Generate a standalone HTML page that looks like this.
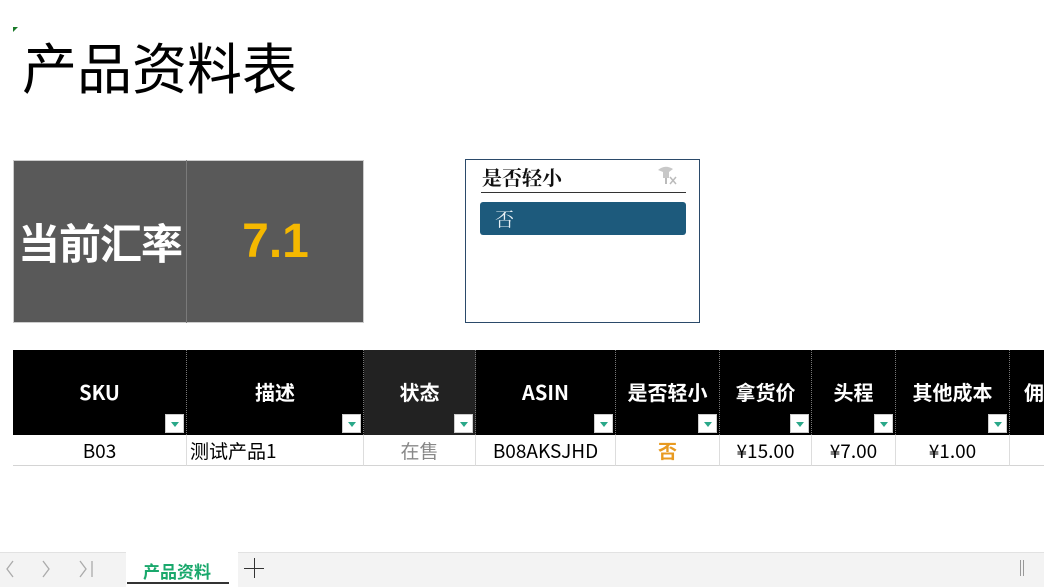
<!DOCTYPE html>
<html><head><meta charset="utf-8"><style>
*{margin:0;padding:0;box-sizing:border-box}
body{width:1044px;height:587px;overflow:hidden;background:#fff;position:relative;font-family:"Liberation Sans","Noto Sans CJK SC",sans-serif}
.a{position:absolute}
.title{left:22px;top:30px;font-size:55px;line-height:70px;color:#000;font-family:"Noto Sans CJK SC",sans-serif}
.h{position:absolute;top:350px;height:85px;background:#000;color:#fff;font-weight:bold;font-size:20px;display:flex;align-items:center;justify-content:center;border-right:1px dotted #777;font-family:"Noto Sans CJK SC",sans-serif}
.h span{margin-top:-2px}
.dd{position:absolute;right:2px;bottom:2px;width:19px;height:19px;background:#fff;border:1px solid #ccc}
.dd:after{content:"";position:absolute;left:5px;top:7px;border-left:4px solid transparent;border-right:4px solid transparent;border-top:5px solid #2aa889}
.d{position:absolute;top:435px;height:31px;border-right:1px solid #ddd;border-bottom:1px solid #d4d4d4;font-size:19px;display:flex;align-items:center;justify-content:center;color:#000;font-family:"Noto Sans CJK SC",sans-serif}
</style></head><body>
<div class="a" style="left:13px;top:27px;width:0;height:0;border-top:5px solid #1a7a2a;border-right:5px solid transparent"></div>
<div class="a title">产品资料表</div>
<div class="a" style="left:13px;top:160px;width:351px;height:163px;background:#595959;border:1px solid #ccc"></div>
<div class="a" style="left:186px;top:160px;width:1px;height:163px;background:#7a7a7a"></div>
<div class="a" style="left:13px;top:160px;width:174px;height:163px;display:flex;align-items:center;justify-content:center;color:#fff;font-weight:bold;font-size:42px;letter-spacing:-1px;font-family:'Noto Sans CJK SC',sans-serif">当前汇率</div>
<div class="a" style="left:187px;top:160px;width:177px;height:163px;display:flex;align-items:center;justify-content:center;color:#f5b800;font-weight:bold;font-size:48px">7.1</div>
<div class="a" style="left:465px;top:159px;width:235px;height:164px;border:1px solid #2b4a6a;background:#fff"></div>
<div class="a" style="left:482px;top:163px;font-size:20px;line-height:28px;font-weight:bold;font-family:'Noto Serif CJK SC',serif;color:#111">是否轻小</div>
<div class="a" style="left:481px;top:192px;width:205px;height:1px;background:#333"></div>
<svg class="a" style="left:655px;top:164px" width="24" height="22" viewBox="0 0 24 22"><path d="M3 6 Q10 0 18 5 L14 8 L14 14 L8 14 L8 8 Z" fill="#c8c8c8"/><path d="M11 14 L11 20" stroke="#bbb" stroke-width="2"/><path d="M15 13 L21 20 M21 13 L15 20" stroke="#bbb" stroke-width="1.5"/></svg>
<div class="a" style="left:480px;top:202px;width:206px;height:33px;background:#1d5a7c;border-radius:3px;color:#e8f0f5;font-size:19px;line-height:33px;padding-left:15px;font-family:'Noto Serif CJK SC',serif">否</div>

<div class="h" style="left:13px;width:174px"><span>SKU</span><i class="dd"></i></div>
<div class="h" style="left:187px;width:177px"><span>描述</span><i class="dd"></i></div>
<div class="h" style="left:364px;width:112px;background:#222"><span>状态</span><i class="dd"></i></div>
<div class="h" style="left:476px;width:140px"><span>ASIN</span><i class="dd"></i></div>
<div class="h" style="left:616px;width:104px"><span>是否轻小</span><i class="dd"></i></div>
<div class="h" style="left:720px;width:92px"><span>拿货价</span><i class="dd"></i></div>
<div class="h" style="left:812px;width:84px"><span>头程</span><i class="dd"></i></div>
<div class="h" style="left:896px;width:114px"><span>其他成本</span><i class="dd"></i></div>
<div class="h" style="left:1010px;width:60px;justify-content:flex-start;padding-left:14px"><span>佣</span></div>

<div class="d" style="left:13px;width:174px">B03</div>
<div class="d" style="left:187px;width:177px;justify-content:flex-start;padding-left:3px">测试产品1</div>
<div class="d" style="left:364px;width:112px;color:#888">在售</div>
<div class="d" style="left:476px;width:140px">B08AKSJHD</div>
<div class="d" style="left:616px;width:104px;color:#e89a20;font-weight:bold">否</div>
<div class="d" style="left:720px;width:92px">¥15.00</div>
<div class="d" style="left:812px;width:84px">¥7.00</div>
<div class="d" style="left:896px;width:114px">¥1.00</div>
<div class="d" style="left:1010px;width:40px"></div>

<div class="a" style="left:0;top:552px;width:1044px;height:35px;background:#f3f3f3;border-top:1px solid #e2e2e2"></div>
<svg class="a" style="left:0;top:555px" width="110" height="28" viewBox="0 0 110 28"><g fill="none" stroke="#aaa" stroke-width="1.3"><path d="M13 6 L7 14 L13 22"/><path d="M43 6 L49 14 L43 22"/><path d="M80 6 L86 14 L80 22"/><path d="M92 6 L92 22"/></g></svg>
<div class="a" style="left:126px;top:552px;width:112px;height:35px;background:#fff"></div>
<div class="a" style="left:143px;top:558px;font-size:17px;font-weight:bold;color:#1aa86c;font-family:'Noto Sans CJK SC',sans-serif">产品资料</div>
<div class="a" style="left:127px;top:582px;width:102px;height:2px;background:#333"></div>
<div class="a" style="left:244px;top:568px;width:20px;height:1px;background:#333"></div>
<div class="a" style="left:254px;top:558px;width:1px;height:20px;background:#333"></div>
<div class="a" style="left:1020px;top:560px;width:1px;height:16px;background:#999"></div>
<div class="a" style="left:1023px;top:560px;width:1px;height:16px;background:#999"></div>
</body></html>
